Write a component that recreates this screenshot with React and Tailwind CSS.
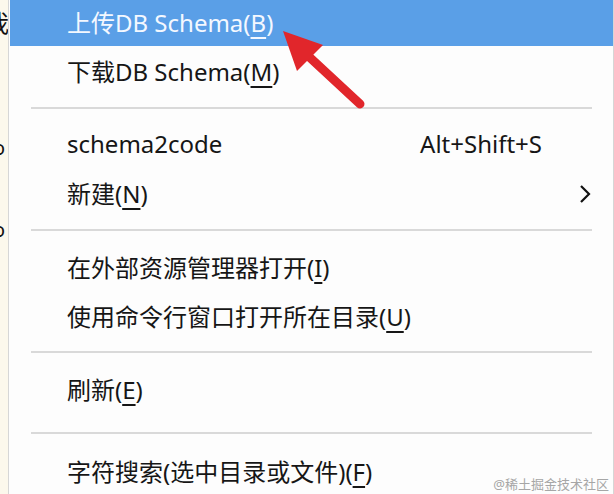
import { ChevronRight } from "lucide-react";

const font = { fontFamily: '"Noto Sans", "Noto Sans CJK SC", sans-serif' };

function Item({ text, hotkey, tail = ")", h, active, shortcut, sub }) {
  return (
    <div
      className={`flex items-center justify-between pl-[57px] ${h} ${
        active ? "bg-[#5a9fe7] text-[#f4f8ff]" : "text-[#161616]"
      }`}
    >
      <span className="text-[24px] leading-none whitespace-nowrap">
        {text}
        {hotkey && (
          <>
            (<span className="underline decoration-[1.5px] underline-offset-[5px]">{hotkey}</span>
            {tail}
          </>
        )}
      </span>
      {shortcut && <span className="text-[24px] leading-none pr-[71px]">{shortcut}</span>}
      {sub && (
        <svg width="14" height="20" viewBox="0 0 14 20" className="mr-[21px]">
          <path d="M3 2 L11 10 L3 18" fill="none" stroke="#111" strokeWidth="2.2" />
        </svg>
      )}
    </div>
  );
}

function Sep({ h }) {
  return (
    <div className={`flex items-center pl-[21px] pr-[21px] ${h}`}>
      <div className="h-[2px] w-full bg-[#d9d9d9]" />
    </div>
  );
}

export default function App() {
  return (
    <div className="relative w-[614px] h-[494px] overflow-hidden flex bg-[#fcf8ec]" style={font}>
      {/* background window peeking out on the left */}
      <div className="w-[8px] shrink-0 overflow-hidden text-[#111] flex flex-col">
        <div className="h-[46px] flex items-center">
          <span className="text-[24px] leading-none -ml-[15px]">我</span>
        </div>
        <div className="h-[90px]" />
        <div className="h-[24px] flex items-center">
          <span className="text-[20px] leading-none -ml-[7px]">o</span>
        </div>
        <div className="h-[58px]" />
        <div className="h-[24px] flex items-center">
          <span className="text-[20px] leading-none -ml-[7px]">o</span>
        </div>
      </div>

      <div className="flex-1 flex flex-col bg-[#fdfdfd] border-l border-r border-[#d6d6d6] pl-px">
        <Item text="上传DB Schema" hotkey="B" h="h-[46px]" active />
        <Item text="下载DB Schema" hotkey="M" h="h-[52px]" />
        <Sep h="h-[20px]" />
        <Item text="schema2code" h="h-[52px]" shortcut="Alt+Shift+S" />
        <Item text="新建" hotkey="N" h="h-[48px]" sub />
        <Sep h="h-[24px]" />
        <Item text="在外部资源管理器打开" hotkey="I" h="h-[52px]" />
        <Item text="使用命令行窗口打开所在目录" hotkey="U" h="h-[46px]" />
        <Sep h="h-[24px]" />
        <Item text="刷新" hotkey="E" h="h-[52px]" />
        <Sep h="h-[34px]" />
        <Item text="字符搜索(选中目录或文件)" hotkey="F" h="h-[44px]" />
      </div>

      {/* red annotation arrow */}
      <svg className="absolute left-0 top-0" width="614" height="494" viewBox="0 0 614 494">
        <line x1="305" y1="53" x2="360" y2="104" stroke="#e1262b" strokeWidth="9" strokeLinecap="round" />
        <polygon points="283,31 323,45 297,71" fill="#e1262b" />
      </svg>

      <span className="absolute right-[5px] bottom-[3px] text-[13px] leading-none text-[#a6a6a6]">
        @稀土掘金技术社区
      </span>
    </div>
  );
}
